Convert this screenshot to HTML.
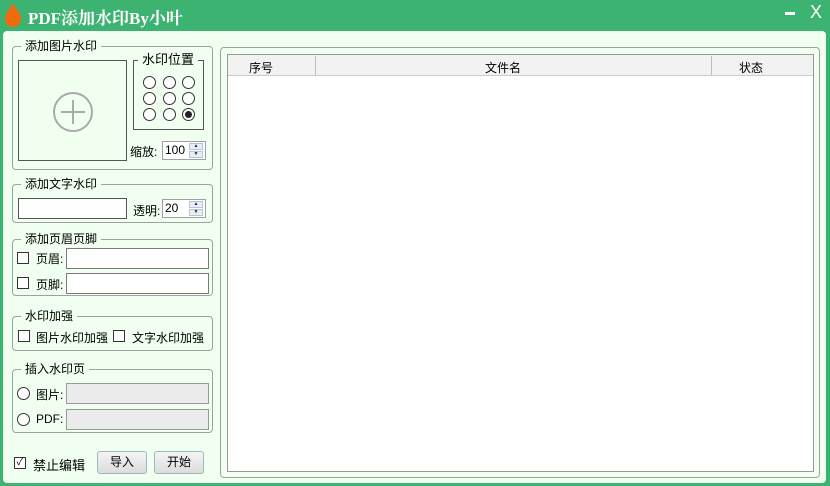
<!DOCTYPE html>
<html><head><meta charset="utf-8"><style>
*{box-sizing:border-box;margin:0;padding:0}
body{width:830px;height:486px;overflow:hidden;background:#3cb371;font-family:"Liberation Sans","Noto Sans CJK SC",sans-serif;font-size:12px;color:#000;position:relative}
.a{position:absolute}
.main{left:3px;top:31px;width:823px;height:452px;background:#f0fff0;border-radius:4px}
.g{border:1px solid #a0a0a0;border-radius:4px}
.gt{background:#f0fff0;padding:0 4px;line-height:14px}
.in{background:#fff;border:1px solid #7a7a7a}
.cb{width:12px;height:12px;border:1px solid #333;background:#fff}
.rd{width:13px;height:13px;border:1px solid #333;border-radius:50%;background:#fff}
.spin{background:#fff;border:1px solid #a0a0a0;padding-left:2px;line-height:17px}
.sb{position:absolute;right:2px;width:14px;height:7px;background:#e8eef6;border:1px solid #b8c4d4;font-size:5px;line-height:5px;text-align:center;color:#225}
.btn{border:1px solid #9bb;border-radius:3px;background:linear-gradient(#f4f4f4,#dcdcdc);text-align:center;line-height:20px}
</style></head><body>
<svg class="a" style="left:3px;top:2px" width="20" height="26" viewBox="0 0 20 26"><path d="M10 1 C7 7 2 11 2 17 a8 8 0 0 0 16 0 C18 11 13 7 10 1Z" fill="#f06a10"/></svg>
<div class="a" style="left:28px;top:4px;color:#fff;font-family:'Liberation Serif','Noto Serif CJK SC',serif;font-size:17px;font-weight:bold">PDF添加水印By小叶</div>
<div class="a" style="left:785px;top:12px;width:10px;height:3px;background:#fff"></div>
<div class="a" style="left:810px;top:2px;color:#fff;font-size:18px">X</div>
<div class="a main"></div>

<div class="a g" style="left:12px;top:46px;width:201px;height:124px"></div>
<div class="a gt" style="left:21px;top:39px">添加图片水印</div>
<div class="a" style="left:18px;top:60px;width:109px;height:101px;border:1px solid #555;background:#f0fff0"></div>
<svg class="a" style="left:52px;top:91px" width="42" height="42"><circle cx="21" cy="21" r="19" fill="none" stroke="#aaa" stroke-width="2"/><path d="M21 9V33M9 21H33" stroke="#aaa" stroke-width="2"/></svg>
<div class="a" style="left:133px;top:60px;width:71px;height:70px;border:1px solid #555"></div>
<div class="a gt" style="left:138px;top:53px;font-size:13px">水印位置</div>
<div class="a rd" style="left:143px;top:76px"></div><div class="a rd" style="left:163px;top:76px"></div><div class="a rd" style="left:182px;top:76px"></div>
<div class="a rd" style="left:143px;top:92px"></div><div class="a rd" style="left:163px;top:92px"></div><div class="a rd" style="left:182px;top:92px"></div>
<div class="a rd" style="left:143px;top:108px"></div><div class="a rd" style="left:163px;top:108px"></div><div class="a rd" style="left:182px;top:108px"><div style="width:7px;height:7px;border-radius:50%;background:#222;margin:2px"></div></div>
<div class="a" style="left:130px;top:143px">缩放:</div>
<div class="a spin" style="left:162px;top:141px;width:44px;height:19px">100<div class="sb" style="top:1px">▲</div><div class="sb" style="top:9px">▼</div></div>

<div class="a g" style="left:12px;top:184px;width:201px;height:39px"></div>
<div class="a gt" style="left:21px;top:177px">添加文字水印</div>
<div class="a in" style="left:18px;top:198px;width:109px;height:21px;border-color:#555"></div>
<div class="a" style="left:133px;top:202px">透明:</div>
<div class="a spin" style="left:162px;top:199px;width:44px;height:19px">20<div class="sb" style="top:1px">▲</div><div class="sb" style="top:9px">▼</div></div>

<div class="a g" style="left:12px;top:239px;width:201px;height:57px"></div>
<div class="a gt" style="left:21px;top:232px">添加页眉页脚</div>
<div class="a cb" style="left:17px;top:252px"></div><div class="a" style="left:36px;top:250px">页眉:</div>
<div class="a in" style="left:66px;top:248px;width:143px;height:21px"></div>
<div class="a cb" style="left:17px;top:277px"></div><div class="a" style="left:36px;top:276px">页脚:</div>
<div class="a in" style="left:66px;top:273px;width:143px;height:21px"></div>

<div class="a g" style="left:12px;top:316px;width:201px;height:35px"></div>
<div class="a gt" style="left:21px;top:309px">水印加强</div>
<div class="a cb" style="left:18px;top:330px"></div><div class="a" style="left:36px;top:329px">图片水印加强</div>
<div class="a cb" style="left:113px;top:330px"></div><div class="a" style="left:132px;top:329px">文字水印加强</div>

<div class="a g" style="left:12px;top:369px;width:201px;height:64px"></div>
<div class="a gt" style="left:21px;top:362px">插入水印页</div>
<div class="a rd" style="left:17px;top:387px"></div><div class="a" style="left:36px;top:386px">图片:</div>
<div class="a in" style="left:66px;top:383px;width:143px;height:21px;background:#ebebeb;border-color:#999"></div>
<div class="a rd" style="left:17px;top:413px"></div><div class="a" style="left:36px;top:412px">PDF:</div>
<div class="a in" style="left:66px;top:409px;width:143px;height:21px;background:#ebebeb;border-color:#999"></div>

<div class="a cb" style="left:14px;top:457px;font-size:10px;line-height:10px;text-align:center">✓</div>
<div class="a" style="left:33px;top:455px;font-size:13px">禁止编辑</div>
<div class="a btn" style="left:97px;top:451px;width:50px;height:23px">导入</div>
<div class="a btn" style="left:154px;top:451px;width:50px;height:23px">开始</div>

<div class="a g" style="left:220px;top:47px;width:600px;height:431px"></div>
<div class="a" style="left:227px;top:54px;width:587px;height:418px;background:#fff;border:1px solid #999"></div>
<div class="a" style="left:228px;top:55px;width:585px;height:21px;background:#f2f2f2;border-bottom:1px solid #ccc"></div>
<div class="a" style="left:315px;top:56px;width:1px;height:19px;background:#bbb"></div>
<div class="a" style="left:711px;top:56px;width:1px;height:19px;background:#bbb"></div>
<div class="a" style="left:249px;top:59px">序号</div>
<div class="a" style="left:485px;top:59px">文件名</div>
<div class="a" style="left:739px;top:59px">状态</div>
</body></html>
